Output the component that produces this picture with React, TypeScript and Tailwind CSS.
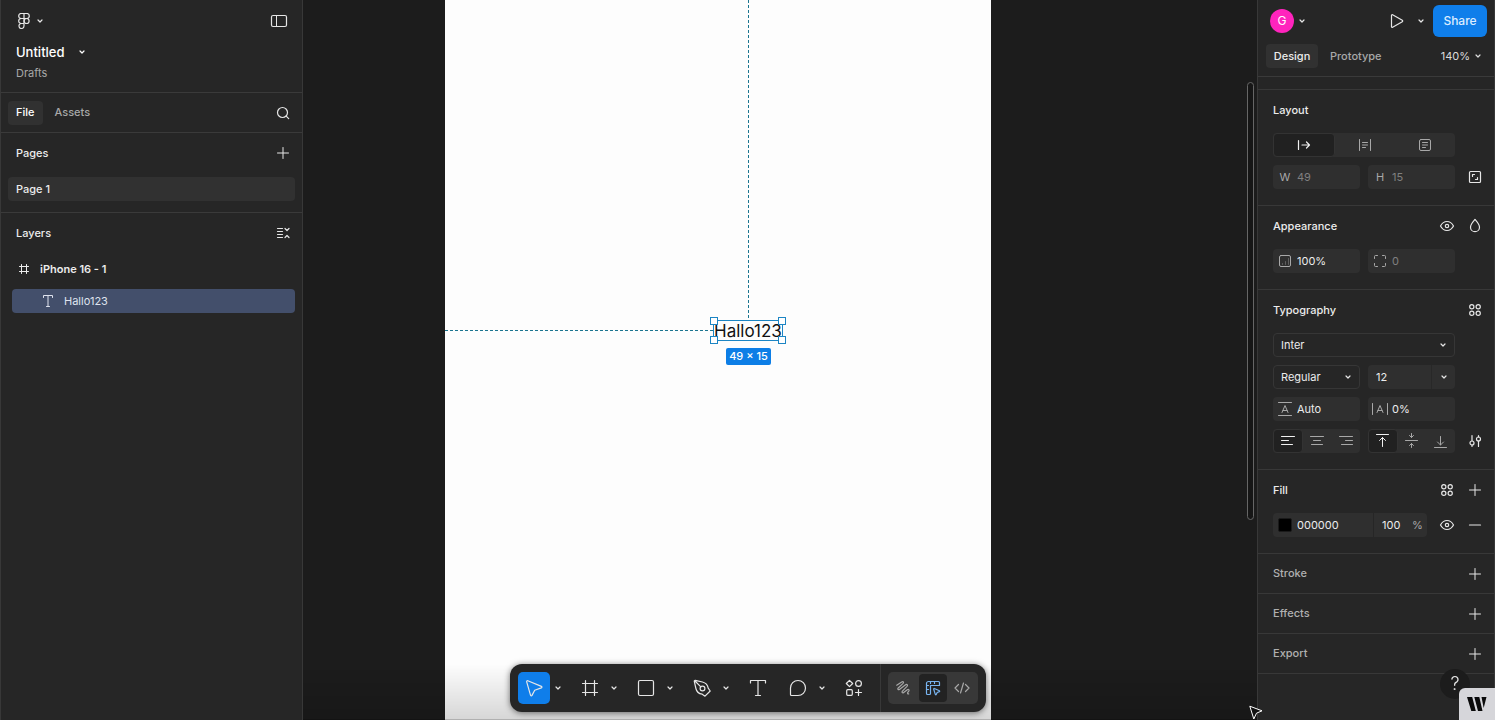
import type { ReactNode } from "react";

type IconProps = { size?: number; className?: string; children: ReactNode };

function Icon({ size = 24, className = "", children }: IconProps) {
  return (
    <svg
      width={size}
      height={size}
      viewBox={`0 0 ${size} ${size}`}
      fill="none"
      stroke="currentColor"
      strokeLinecap="round"
      strokeLinejoin="round"
      aria-hidden="true"
      className={`shrink-0 ${className}`}
    >
      {children}
    </svg>
  );
}

function Chevron({ className = "" }: { className?: string }) {
  return (
    <Icon size={16} className={className}>
      <path d="M6 7l2 2 2-2" strokeWidth="1.2" />
    </Icon>
  );
}

const Plus = () => (
  <Icon>
    <path d="M12 6.500v11M6.500 12h11" />
  </Icon>
);

const Eye = () => (
  <Icon>
    <path d="M5.500 12c1.600-3 4-4.500 6.500-4.500s4.900 1.500 6.500 4.500c-1.600 3-4 4.500-6.500 4.500S7.100 15 5.500 12z" strokeWidth="1.200" />
    <circle cx="12" cy="12" r="1.700" strokeWidth="1.200" />
  </Icon>
);

const Styles = () => (
  <Icon>
    <circle cx="8.800" cy="8.800" r="2.100" strokeWidth="1.200" />
    <circle cx="15.200" cy="8.800" r="2.100" strokeWidth="1.200" />
    <circle cx="8.800" cy="15.200" r="2.100" strokeWidth="1.200" />
    <circle cx="15.200" cy="15.200" r="2.100" strokeWidth="1.200" />
  </Icon>
);

const FrameIcon = ({ size = 24 }: { size?: number }) =>
  size === 24 ? (
    <Icon>
      <path d="M7.500 4.500v15M16.500 4.500v15M4.500 7.500h15M4.500 16.500h15" strokeWidth="1.200" />
    </Icon>
  ) : (
    <Icon size={16}>
      <path d="M5.500 3.500v9M10.500 3.500v9M3.500 5.500h9M3.500 10.500h9" />
    </Icon>
  );

type ButtonProps = { label: string; className?: string; children: ReactNode };

function IconButton({ label, className = "", children }: ButtonProps) {
  return (
    <button
      type="button"
      aria-label={label}
      className={`flex h-6 w-6 shrink-0 items-center justify-center rounded text-[#e6e6e6] ${className}`}
    >
      {children}
    </button>
  );
}

function LeftPanel() {
  return (
    <aside className="flex w-[303px] shrink-0 flex-col border-x border-[#383838] bg-[#262626]">
      <header className="h-[93px] border-b border-[#3a3a3a] pl-[15px] pr-[11px] pt-[9px]">
        <div className="flex items-center justify-between">
          <button type="button" aria-label="Main menu" className="flex h-6 items-center text-[#e6e6e6]">
            <Icon size={16}>
              <path
                d="M8 .5H5.200a2.500 2.500 0 000 5H8zM8 .5h2.800a2.500 2.500 0 010 5H8zM8 5.500H5.200a2.500 2.500 0 000 5H8zM8 10.500H5.200a2.500 2.500 0 102.800 2.500z"
                strokeWidth="1.200"
              />
              <circle cx="10.600" cy="8" r="2.500" strokeWidth="1.200" />
            </Icon>
            <Chevron />
          </button>
          <IconButton label="Toggle sidebar">
            <Icon>
              <rect x="4.500" y="6.500" width="15" height="11" rx="1.500" strokeWidth="1.200" />
              <path d="M9.500 6.500v11" />
            </Icon>
          </IconButton>
        </div>
        <button type="button" className="mt-[10px] flex items-center gap-[9px] text-[13px] leading-[18px] font-[550] text-white">
          Untitled
          <Chevron />
        </button>
        <a href="#drafts" className="mt-1 block w-fit text-[11px] leading-4 text-[#a8a8a8]">
          Drafts
        </a>
      </header>

      <nav className="flex h-10 items-center gap-1 border-b border-[#3a3a3a] px-[7px]">
        <button type="button" className="h-6 rounded bg-[#313131] px-2 font-[550] text-white">
          File
        </button>
        <button type="button" className="h-6 px-2 font-medium text-[#a8a8a8]">
          Assets
        </button>
        <IconButton label="Search" className="ml-auto">
          <Icon>
            <circle cx="11.500" cy="11.500" r="5" strokeWidth="1.200" />
            <path d="M15.200 15.200l2.500 2.500" strokeWidth="1.200" />
          </Icon>
        </IconButton>
      </nav>

      <section className="border-b border-[#3a3a3a] px-[7px] pb-[11px]">
        <div className="flex h-11 items-start justify-between pl-2 pt-2">
          <h2 className="leading-6 font-[550] text-[#ececec]">Pages</h2>
          <IconButton label="Add page">
            <Plus />
          </IconButton>
        </div>
        <button type="button" className="h-6 w-full rounded bg-[#313131] px-2 text-left font-[550] text-[#ececec]">
          Page 1
        </button>
      </section>

      <section className="px-[7px] pt-2">
        <div className="flex items-center justify-between pl-2">
          <h2 className="leading-6 font-[550] text-[#ececec]">Layers</h2>
          <IconButton label="Collapse layers">
            <Icon>
              <path d="M6.500 7.500h5M6.500 10.500h5M6.500 13.500h5M6.500 16.500h5M14 7.500l2 2 2-2M14 16.500l2-2 2 2" strokeWidth="1.200" />
            </Icon>
          </IconButton>
        </div>
        <ul className="mt-3 flex flex-col gap-2">
          <li>
            <button type="button" className="flex h-6 w-full items-center gap-2 pl-2 font-semibold text-[#ececec]">
              <FrameIcon size={16} />
              iPhone 16 - 1
            </button>
          </li>
          <li className="pl-1">
            <button type="button" className="flex h-6 w-full items-center gap-2 rounded bg-[#434f6b] pl-7 text-[#dfe3ee]">
              <Icon size={16}>
                <path d="M3.500 4.500v-2h9v2M8 2.500v11M6.500 13.500h3" />
              </Icon>
              Hallo123
            </button>
          </li>
        </ul>
      </section>
    </aside>
  );
}

const handle = "absolute h-2 w-2 border border-[#1c85c4] bg-white";

function Canvas() {
  return (
    <main className="relative min-w-0 flex-1 overflow-hidden bg-[#1c1c1c]">
      <div className="absolute inset-y-0 left-[142px] w-[546px] bg-[#fdfdfd]">
        <svg className="absolute inset-0 h-full w-full" fill="none" stroke="#1b7590" strokeDasharray="3 2" aria-hidden="true">
          <path d="M303.500 0v319M0 330.500h268" />
        </svg>
        <div className="absolute left-[268px] top-[320px] h-[21px] w-[70px] border border-[#1c85c4] text-[17px] leading-[20px] whitespace-nowrap text-[#111]">
          Hallo123
          <span className={`${handle} -left-1 -top-1`} />
          <span className={`${handle} -right-1 -top-1`} />
          <span className={`${handle} -bottom-1 -left-1`} />
          <span className={`${handle} -bottom-1 -right-1`} />
        </div>
        <div className="absolute left-[281px] top-[348px] flex h-[17px] w-[45px] items-center justify-center rounded-xs bg-[#0d7ee6] font-[550] whitespace-nowrap text-white">
          49 × 15
        </div>
      </div>
      <div className="absolute right-[3px] top-[82px] h-[438px] w-[7px] rounded-full border border-[#666] bg-[#161616]" />
      <div className="pointer-events-none absolute inset-x-0 bottom-0 h-14 border-b border-black/30 bg-linear-to-b from-black/0 to-black/15" />
    </main>
  );
}

type SectionProps = { title: string; actions?: ReactNode; children: ReactNode };

function Section({ title, actions, children }: SectionProps) {
  return (
    <section className="border-b border-[#383838] pb-4 pl-[15px] pr-[7px]">
      <div className="flex h-10 items-center justify-between">
        <h2 className="font-[550] text-[#ececec]">{title}</h2>
        <div className="flex gap-1">{actions}</div>
      </div>
      <div className="flex flex-col gap-2 pt-[3px]">{children}</div>
    </section>
  );
}

function EmptySection({ title }: { title: string }) {
  return (
    <section className="flex h-10 items-center justify-between border-b border-[#383838] pl-[15px] pr-[7px]">
      <h2 className="font-medium text-[#b0b0b0]">{title}</h2>
      <IconButton label={`Add ${title}`} className="text-[#b0b0b0]">
        <Plus />
      </IconButton>
    </section>
  );
}

function Row({ children, action }: { children: ReactNode; action?: ReactNode }) {
  return (
    <div className="flex items-center gap-2">
      <div className="flex min-w-0 flex-1 gap-2">{children}</div>
      <div className="flex w-6 justify-center">{action}</div>
    </div>
  );
}

type FieldProps = { label: string; icon: ReactNode; value: string; muted?: boolean };

function Field({ label, icon, value, muted = false }: FieldProps) {
  return (
    <label className="flex h-6 min-w-0 flex-1 items-center rounded bg-[#2f2f2f] text-[#a8a8a8]">
      <span className="flex w-6 shrink-0 justify-center">{icon}</span>
      <input
        aria-label={label}
        defaultValue={value}
        className={`w-0 min-w-0 flex-1 bg-transparent outline-none ${muted ? "text-[#808080]" : "text-[#ececec]"}`}
      />
    </label>
  );
}

function Select({ label, value }: { label: string; value: string }) {
  return (
    <div className="relative min-w-0 flex-1">
      <select
        aria-label={label}
        className="block h-6 w-full appearance-none rounded border border-[#363636] bg-[#262626] pl-[7px] text-[#ececec] outline-none"
      >
        <option>{value}</option>
      </select>
      <Chevron className="pointer-events-none absolute right-1 top-1 text-[#e6e6e6]" />
    </div>
  );
}

type Segment = { label: string; icon: ReactNode };

function Segmented({ items }: { items: Segment[] }) {
  return (
    <div className="flex h-6 min-w-0 flex-1 rounded bg-[#2f2f2f]">
      {items.map((item, i) => (
        <button
          key={item.label}
          type="button"
          aria-label={item.label}
          aria-pressed={i === 0}
          className={`flex flex-1 basis-0 items-center justify-center rounded ${
            i === 0 ? "border border-[#333] bg-[#212121] text-[#f0f0f0]" : "text-[#a8a8a8]"
          }`}
        >
          {item.icon}
        </button>
      ))}
    </div>
  );
}

const resizing: Segment[] = [
  {
    label: "Auto width",
    icon: (
      <Icon size={16}>
        <path d="M2.500 3.500v9M6 8h7.500M10.500 5l3 3-3 3" strokeWidth="1.200" />
      </Icon>
    ),
  },
  {
    label: "Auto height",
    icon: (
      <Icon size={16}>
        <path d="M2.500 2.500v11M13.500 2.500v11M5.500 5.500h5M5.500 8h5M5.500 10.500h3" />
      </Icon>
    ),
  },
  {
    label: "Fixed size",
    icon: (
      <Icon size={16}>
        <rect x="2.500" y="2.500" width="11" height="11" rx="1.500" />
        <path d="M5.500 5.500h5M5.500 8h5M5.500 10.500h3" />
      </Icon>
    ),
  },
];

const horizontal: Segment[] = [
  { label: "Align left", icon: <Icon size={16}><path d="M1.500 3.500h13M1.500 7.500h7M1.500 11.500h11" /></Icon> },
  { label: "Align center", icon: <Icon size={16}><path d="M1.500 3.500h13M4.500 7.500h7M2.500 11.500h11" /></Icon> },
  { label: "Align right", icon: <Icon size={16}><path d="M1.500 3.500h13M7.500 7.500h7M3.500 11.500h11" /></Icon> },
];

const vertical: Segment[] = [
  { label: "Align top", icon: <Icon size={16}><path d="M1.500 1.500h12M7.500 13.500v-9M4.500 7.500l3-3 3 3" /></Icon> },
  { label: "Align middle", icon: <Icon size={16}><path d="M1.500 7.500h12M7.500 .5v4M5.500 2.500l2 2 2-2M7.500 14.500v-4M5.500 12.500l2-2 2 2" /></Icon> },
  { label: "Align bottom", icon: <Icon size={16}><path d="M1.500 14.500h12M7.500 3.500v8.500M4.500 9l3 3 3-3" /></Icon> },
];

function RightPanel() {
  return (
    <aside className="flex w-[238px] shrink-0 flex-col border-x border-[#383838] bg-[#262626]">
      <header className="h-[77px] border-b border-[#3a3a3a]">
        <div className="flex items-center pl-3 pr-[7px] pt-[5px]">
          <button type="button" aria-label="Account" className="flex items-center">
            <span className="flex h-6 w-6 items-center justify-center rounded-full bg-[#ff24bd] text-xs text-white">G</span>
            <Chevron className="text-[#e6e6e6]" />
          </button>
          <IconButton label="Present" className="ml-auto">
            <Icon>
              <path
                d="M6.500 6.300v11.400c0 .6.600.9 1.100.6l9.700-5.600c.5-.3.500-1.100 0-1.400L7.600 5.700c-.5-.3-1.100 0-1.100.6z"
                strokeWidth="1.200"
              />
            </Icon>
          </IconButton>
          <button type="button" aria-label="Present options" className="ml-1 flex h-6 items-center text-[#e6e6e6]">
            <Chevron />
          </button>
          <button type="button" className="ml-1 h-8 w-[54px] rounded-md bg-[#0f7eea] text-xs font-medium text-[#dcecff]">
            Share
          </button>
        </div>
        <div className="flex items-center px-2 pt-[7px]">
          <button type="button" className="h-6 w-[52px] rounded bg-[#313131] font-[550] text-[#ececec]">
            Design
          </button>
          <button type="button" className="ml-1 h-6 px-2 font-medium text-[#a8a8a8]">
            Prototype
          </button>
          <button type="button" className="ml-auto flex h-6 items-center text-[#dcdcdc]">
            140%
            <Chevron />
          </button>
        </div>
      </header>
      <div className="h-[13px] border-b border-[#383838]" />

      <Section title="Layout">
        <Row>
          <Segmented items={resizing} />
        </Row>
        <Row
          action={
            <IconButton label="Resize to fit">
              <Icon>
                <rect x="6.500" y="6.500" width="11" height="11" rx="1" strokeWidth="1.200" />
                <path d="M9.500 11.500v-2h2M14.500 12.500v2h-2" strokeWidth="1.200" />
              </Icon>
            </IconButton>
          }
        >
          <Field label="Width" icon="W" value="49" muted />
          <Field label="Height" icon="H" value="15" muted />
        </Row>
      </Section>

      <Section
        title="Appearance"
        actions={
          <>
            <IconButton label="Visibility">
              <Eye />
            </IconButton>
            <IconButton label="Blend mode">
              <Icon>
                <path d="M12 5.500c2.300 2.700 4.500 5 4.500 7.700a4.500 4.500 0 01-9 0c0-2.700 2.200-5 4.500-7.700z" strokeWidth="1.200" />
              </Icon>
            </IconButton>
          </>
        }
      >
        <Row>
          <Field
            label="Opacity"
            value="100%"
            icon={
              <Icon size={16}>
                <rect x="2.500" y="2.500" width="11" height="11" rx="1.500" />
                <path d="M5.500 10.500v1M8.500 8.500v3M11.500 5.500v6" opacity=".4" />
              </Icon>
            }
          />
          <Field
            label="Corner radius"
            value="0"
            muted
            icon={
              <Icon size={16}>
                <path d="M2.500 5.500v-2a1 1 0 011-1h2M10.500 2.500h2a1 1 0 011 1v2M13.500 10.500v2a1 1 0 01-1 1h-2M5.500 13.500h-2a1 1 0 01-1-1v-2" />
              </Icon>
            }
          />
        </Row>
      </Section>

      <Section
        title="Typography"
        actions={
          <IconButton label="Text styles">
            <Styles />
          </IconButton>
        }
      >
        <Row>
          <Select label="Font family" value="Inter" />
        </Row>
        <Row>
          <Select label="Font weight" value="Regular" />
          <div className="flex h-6 min-w-0 flex-1 rounded bg-[#2f2f2f]">
            <input
              aria-label="Font size"
              defaultValue="12"
              className="w-0 min-w-0 flex-1 bg-transparent pl-2 text-[#ececec] outline-none"
            />
            <button
              type="button"
              aria-label="Font size options"
              className="flex w-6 items-center justify-center border-l border-[#282828] text-[#e6e6e6]"
            >
              <Chevron />
            </button>
          </div>
        </Row>
        <Row>
          <Field
            label="Line height"
            value="Auto"
            icon={
              <Icon size={16}>
                <path d="M1.500 1.500h13M1.500 14.500h13M5 11.500l3-7 3 7M6 9.500h4" />
              </Icon>
            }
          />
          <Field
            label="Letter spacing"
            value="0%"
            icon={
              <Icon size={16}>
                <path d="M.5 2.500v11M15.500 2.500v11M5 11.500l3-7 3 7M6 9.500h4" />
              </Icon>
            }
          />
        </Row>
        <Row
          action={
            <IconButton label="Type settings">
              <Icon>
                <circle cx="9" cy="14" r="2" strokeWidth="1.200" />
                <path d="M9 6.500V12M9 16v1.500M15.500 12v5.500M15.500 6.500V8" strokeWidth="1.200" />
                <circle cx="15.500" cy="10" r="2" strokeWidth="1.200" />
              </Icon>
            </IconButton>
          }
        >
          <Segmented items={horizontal} />
          <Segmented items={vertical} />
        </Row>
      </Section>

      <Section
        title="Fill"
        actions={
          <>
            <IconButton label="Fill styles">
              <Styles />
            </IconButton>
            <IconButton label="Add fill">
              <Plus />
            </IconButton>
          </>
        }
      >
        <div className="flex items-center">
          <div className="flex h-6 min-w-0 flex-1 items-center rounded bg-[#2f2f2f] text-[#ececec]">
            <button type="button" aria-label="Fill color" className="ml-[5px] h-[14px] w-[14px] shrink-0 rounded-xs border border-[#1a1a1a] bg-black" />
            <input aria-label="Hex color" defaultValue="000000" className="ml-1 w-0 min-w-0 flex-1 bg-transparent pl-px outline-none" />
            <label className="flex h-6 w-[54px] items-center border-l border-[#262626] pl-2 text-[#a8a8a8]">
              <input aria-label="Fill opacity" defaultValue="100" className="w-[30px] bg-transparent text-[#ececec] outline-none" />
              %
            </label>
          </div>
          <div className="ml-2 flex gap-1">
            <IconButton label="Toggle fill">
              <Eye />
            </IconButton>
            <IconButton label="Remove fill">
              <Icon>
                <path d="M6.500 12h11" strokeWidth="1.200" />
              </Icon>
            </IconButton>
          </div>
        </div>
      </Section>
      <EmptySection title="Stroke" />
      <EmptySection title="Effects" />
      <EmptySection title="Export" />
    </aside>
  );
}

function Tool({ label, menu = false, active = false, children }: { label: string; menu?: boolean; active?: boolean; children: ReactNode }) {
  return (
    <div className="flex items-center text-[#e6e6e6]">
      <button
        type="button"
        aria-label={label}
        className={`flex h-8 w-8 items-center justify-center rounded-[5px] ${active ? "bg-[#0f7eea]" : ""}`}
      >
        {children}
      </button>
      {menu && (
        <button type="button" aria-label={`${label} options`} className="flex h-8 w-4 items-center">
          <Chevron />
        </button>
      )}
    </div>
  );
}

function Toolbar() {
  return (
    <div className="fixed bottom-2 left-1/2 flex h-12 -translate-x-1/2 items-center rounded-xl bg-[#262626] px-2 shadow-[0_1px_6px_rgba(0,0,0,0.55)]">
      <div className="flex gap-2">
        <Tool label="Move" menu active>
          <Icon>
            <path d="M4.700 5.800l3.800 13.400c.2.700 1.100.8 1.500.2l2.700-5.200 6.600-2.300c.8-.3.800-1.200.1-1.500L5.800 4.800c-.7-.3-1.300.3-1.100 1z" strokeWidth="1.200" />
          </Icon>
        </Tool>
        <Tool label="Frame" menu>
          <FrameIcon />
        </Tool>
        <Tool label="Rectangle" menu>
          <Icon>
            <rect x="4.500" y="4.500" width="15" height="15" rx="1.500" strokeWidth="1.200" />
          </Icon>
        </Tool>
        <Tool label="Pen" menu>
          <Icon>
            <path
              d="M4.300 5.300l1.600 7.200c.7 3.300 3 5.200 6.300 5.700l2.800 2 5.200-5.200-2-2.800c-.5-3.300-2.600-5.400-5.800-6.200L5.200 4.300c-.6-.1-1 .4-.9 1zM5 5l5.800 5.800"
              strokeWidth="1.200"
            />
            <circle cx="12.500" cy="12.500" r="2.400" strokeWidth="1.200" />
          </Icon>
        </Tool>
        <Tool label="Text">
          <Icon>
            <path d="M4.500 7V4.500h15V7M12 4.500v15M9.500 19.500h5" strokeWidth="1.200" />
          </Icon>
        </Tool>
        <Tool label="Comment" menu>
          <Icon>
            <path d="M12 4.500a7.500 7.500 0 110 15H5.500c-.6 0-1-.4-1-1V12A7.500 7.500 0 0112 4.500z" strokeWidth="1.200" />
          </Icon>
        </Tool>
        <Tool label="Actions">
          <Icon>
            <path d="M7.500 4.300l3.200 3.200-3.200 3.200-3.200-3.200zM16.500 13.500v6M13.500 16.500h6" strokeWidth="1.200" />
            <circle cx="16.500" cy="7.500" r="2.900" strokeWidth="1.200" />
            <rect x="4.700" y="13.700" width="5.600" height="5.600" rx="1" strokeWidth="1.200" />
          </Icon>
        </Tool>
      </div>
      <div className="ml-[10px] h-12 w-px bg-[#383838]" />
      <div className="ml-[7px] flex h-8 items-center rounded-[5px] bg-[#383838] text-[#a8a8a8]">
        <button type="button" aria-label="Draw" className="flex h-8 w-[31px] items-center justify-center">
          <Icon>
            <path
              d="M5.700 9.200l5-3.200c1.500-.9 2.400.3 1.400 1.400l-4.900 4.600c-1 1.100 0 2.200 1.200 1.400l6.200-4.600c1.400-1 2.500.3 1.400 1.500l-4.600 4.800c-1 1.200.1 2.300 1.300 1.400l3.600-2.700c1.200-.9 2.300.2 1.500 1.300l-1 1.300c-.6.900 0 1.700.9 1.500"
              strokeWidth="1.200"
            />
          </Icon>
        </button>
        <button type="button" aria-label="Design" aria-pressed="true" className="flex h-7 w-7 items-center justify-center rounded bg-[#222] text-[#78b4f0]">
          <Icon>
            <path
              d="M18.500 9.500v-3a1 1 0 00-1-1h-10a2 2 0 00-2 2v10a1 1 0 001 1h2a1 1 0 001-1v-8zM9.500 9.500h9M9.500 5.500v2M13.500 5.500v2M5.500 9.500h2M5.500 13.500h2"
              strokeWidth="1.200"
            />
            <path d="M12.700 13.200l1.600 5.200c.2.500.7.500.9.100l1-2 2.200-.9c.4-.2.400-.7 0-.9l-5-2.200c-.4-.2-.8.200-.7.700z" strokeWidth="1.200" />
          </Icon>
        </button>
        <button type="button" aria-label="Dev mode" className="flex h-8 w-[31px] items-center justify-center">
          <Icon>
            <path d="M8.500 8.500L5 12l3.500 3.500M15.500 8.500L19 12l-3.500 3.500M13.500 7l-3 10" strokeWidth="1.200" />
          </Icon>
        </button>
      </div>
    </div>
  );
}

export default function App() {
  return (
    <div className="flex h-screen overflow-hidden bg-[#1c1c1c] font-['Inter',sans-serif] text-[11px] text-white">
      <LeftPanel />
      <Canvas />
      <RightPanel />
      <Toolbar />
      <button
        type="button"
        aria-label="Help"
        className="fixed bottom-[21px] right-[25px] flex h-[30px] w-[30px] items-center justify-center rounded-full bg-[#1c1c1c] text-lg font-light text-[#e6e6e6]"
      >
        ?
      </button>
      <a
        href="#widget"
        aria-label="Widget"
        className="fixed bottom-0 right-0 flex h-8 w-9 items-center justify-center rounded-tl-md bg-[#d6d6da]"
      >
        <svg width="20" height="16" viewBox="0 0 20 16" fill="#0a0a0a" aria-hidden="true">
          <path d="M0 1h5.200l3.600 14H4.300zM7.300 1h5l3.200 14H11zM14.500 1H19.500l-2.800 11z" />
        </svg>
      </a>
      <svg className="pointer-events-none fixed bottom-0 right-[232px]" width="14" height="15" viewBox="0 0 14 15" aria-hidden="true">
        <path d="M.8 1.200l12.200 4.600-5.500 2.400-2.700 5.800z" fill="#111" stroke="#fff" strokeLinejoin="round" />
      </svg>
    </div>
  );
}
